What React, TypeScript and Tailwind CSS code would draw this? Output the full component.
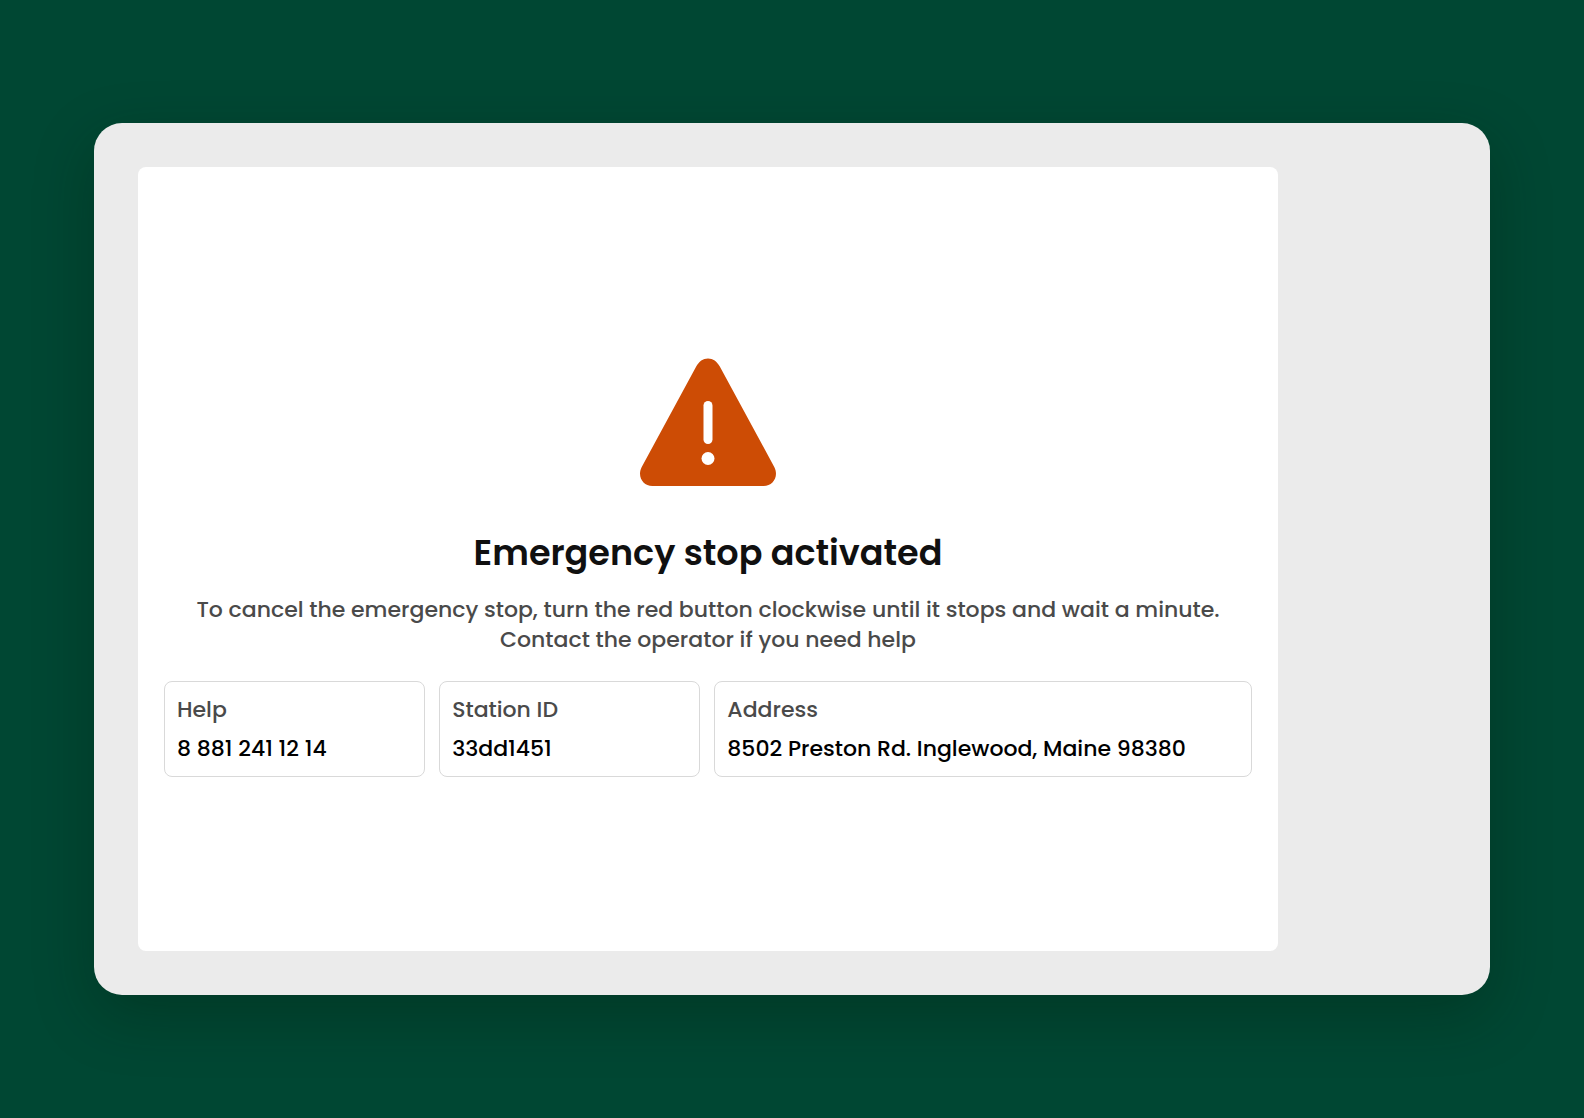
const details = [
  { label: "Help", value: "8 881 241 12 14" },
  { label: "Station ID", value: "33dd1451" },
  { label: "Address", value: "8502 Preston Rd. Inglewood, Maine 98380" },
];

function WarningIcon() {
  return (
    <svg viewBox="0 0 162 162" className="size-[162px]" role="img" aria-label="Warning">
      <path
        fill="#cd4c05"
        d="M69.2 25.6C72 20.2 76 17.4 81 17.4S90 20.2 92.8 25.6L147.4 126.2C152 135.6 146 145 136.6 145H25.4C16 145 10 135.6 14.6 126.2Z"
      />
      <rect x="76.5" y="60" width="9" height="43" rx="4.5" fill="#fff" />
      <circle cx="81" cy="117.5" r="6.5" fill="#fff" />
    </svg>
  );
}

export default function App() {
  return (
    <div className="flex min-h-screen bg-[#004733] px-[94px] py-[123px] font-['Poppins','Inter',sans-serif]">
      <div className="flex flex-1 rounded-[28px] bg-[#ebebeb] py-11 pr-[212px] pl-11 shadow-[0_20px_60px_rgba(0,25,10,0.3)]">
        <main className="flex flex-1 flex-col items-center justify-center rounded-lg bg-white px-[26px]">
          <WarningIcon />
          <h1 className="mt-7 text-center text-[35px] leading-[44px] font-semibold text-[#101010]">
            Emergency stop activated
          </h1>
          <p className="mt-5 text-center text-[22px] leading-[30px] font-medium text-[#4a4a4a]">
            To cancel the emergency stop, turn the red button clockwise until it stops and wait a minute.
            <br />
            Contact the operator if you need help
          </p>
          <dl className="mt-[26px] grid w-full grid-cols-[17fr_17fr_35fr] gap-[14px]">
            {details.map((d) => (
              <div
                key={d.label}
                className="flex flex-col gap-2 rounded-lg border border-[#d9d9d9] p-3 text-[22px] leading-[31px] font-medium"
              >
                <dt className="text-[#4a4a4a]">{d.label}</dt>
                <dd className="text-black">{d.value}</dd>
              </div>
            ))}
          </dl>
        </main>
      </div>
    </div>
  );
}
